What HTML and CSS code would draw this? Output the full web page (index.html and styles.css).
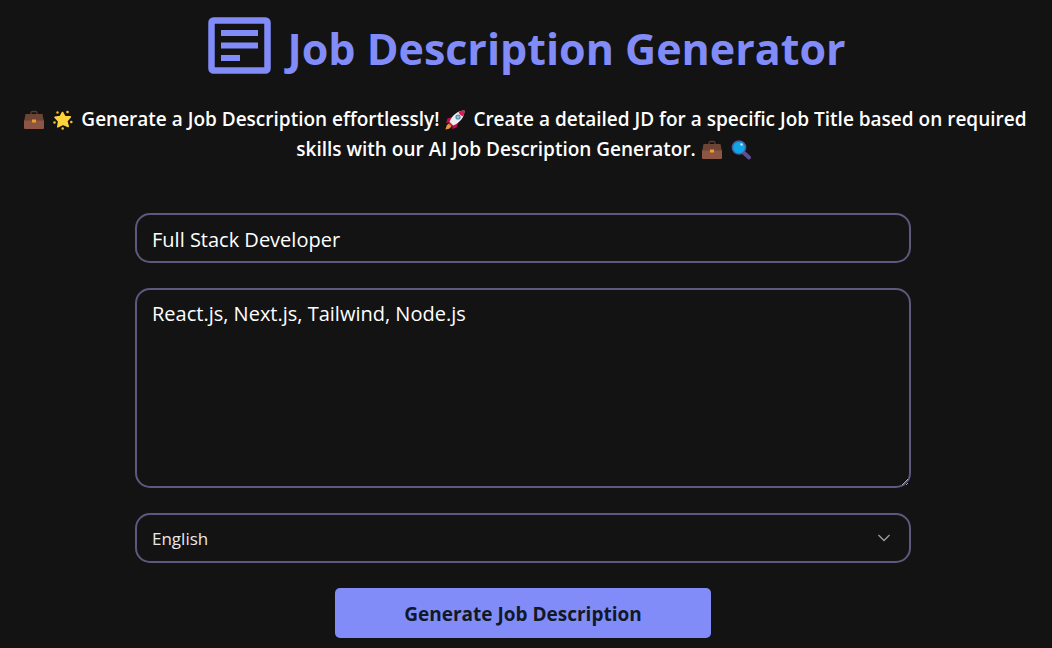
FILE: index.html
```html
<!DOCTYPE html>
<html lang="en">
<head>
<meta charset="utf-8">
<meta name="viewport" content="width=device-width, initial-scale=1">
<title>Job Description Generator</title>
<link rel="stylesheet" href="styles.css">
</head>
<body>
<svg class="sprite" aria-hidden="true">
  <symbol id="briefcase" viewBox="0 0 20 20">
    <path d="M7 5V3q0-1.500 1.500-1.500h3q1.500 0 1.500 1.500v2" fill="none" stroke="#5b3a2e" stroke-width="1.300"/>
    <path d="M1.500 4h17L20 12H0z" fill="#6d4534"/>
    <path d="M0 10.500h20V18q0 1-1 1H1q-1 0-1-1z" fill="#8c5642"/>
    <rect x="8" y="9.500" width="4" height="3" fill="#ee9a2f"/>
  </symbol>
  <symbol id="star" viewBox="0 0 20 20">
    <path d="M9.500 2.500l2.300 4.200 5.500.2-3.500 4.200 1.400 5.400-5.200-2.200-5.200 2.500.9-5.500L2 7.300l5.200-.7z" fill="#ffd43b" stroke="#ffd43b" stroke-width="1.600" stroke-linejoin="round"/>
    <g fill="#f8bd2f"><circle cx="4.500" cy="2.500" r="1.200"/><circle cx="14.500" cy="2" r="1.300"/><circle cx="1.500" cy="12.500" r="1.300"/><circle cx="18.300" cy="12" r="1.300"/><circle cx="9.700" cy="18.500" r="1.300"/></g>
  </symbol>
  <symbol id="rocket" viewBox="0 0 20 20">
    <path d="M7 7L2.500 8.500 1 13l5-1zM13 13l-1.500 4.500L7 19l1-5z" fill="#ca0b4a"/>
    <path d="M5.500 13.500c-3 0-4 1.500-5 6 3.500-.5 6-1.500 6-4.500z" fill="#e9953a"/>
    <path d="M4.500 12C7 5 13 .5 19.500.5 19.500 7 15 13 8 15.500z" fill="#eceff1"/>
    <path d="M13.500 1.800Q16.500.5 19.500.5q0 3-1.300 6Q14.500 5.500 13.500 1.800zM4.500 12l3.500 3.500-1.500 1-3-3z" fill="#dc1956"/>
    <circle cx="13" cy="7" r="2.600" fill="#5586a5"/><circle cx="13" cy="7" r="1.500" fill="#81c7e6"/>
  </symbol>
  <symbol id="search" viewBox="0 0 20 20">
    <path d="M12.500 12.500l5.500 5" stroke="#5c4e91" stroke-width="4" stroke-linecap="round"/>
    <circle cx="8" cy="7.500" r="6.600" fill="#0ea5e9" stroke="#4b5e9c" stroke-width="1.500"/>
    <path d="M9.500 3.500h2v2h-2z" fill="#eaf8ff"/>
  </symbol>
</svg>

<header class="header">
  <h1 class="title">
    <svg class="title-icon" viewBox="0 0 63 57" aria-hidden="true">
      <rect x="3.500" y="3.500" width="56" height="50" rx="2" fill="none" stroke="currentColor" stroke-width="6.500"/>
      <path d="M13 16h37M13 28.500h37M13 41h19" fill="none" stroke="currentColor" stroke-width="6"/>
    </svg>
    <span class="title-text">Job Description Generator</span>
  </h1>
  <p class="intro">
    <svg class="emoji" role="img" aria-label="briefcase"><use href="#briefcase"/></svg>
    <svg class="emoji" role="img" aria-label="glowing star"><use href="#star"/></svg>
    <span>Generate a Job Description effortlessly!</span>
    <svg class="emoji" role="img" aria-label="rocket"><use href="#rocket"/></svg>
    <span>Create a detailed JD for a specific Job Title based on required skills with our AI Job Description Generator.</span>
    <svg class="emoji" role="img" aria-label="briefcase"><use href="#briefcase"/></svg>
    <svg class="emoji" role="img" aria-label="magnifying glass"><use href="#search"/></svg>
  </p>
</header>

<main class="main">
  <form class="form">
    <input class="field field-title" type="text" aria-label="Job title" value="Full Stack Developer">
    <textarea class="field field-skills" aria-label="Required skills" spellcheck="false">React.js, Next.js, Tailwind, Node.js</textarea>
    <div class="select-wrap">
      <select class="field field-select" aria-label="Language"><option>English</option></select>
      <svg class="chevron" viewBox="0 0 12 8" aria-hidden="true"><path d="M.5 1L6 6.500 11.500 1" fill="none" stroke="currentColor" stroke-width="1.300"/></svg>
    </div>
    <button class="submit" type="button">Generate Job Description</button>
  </form>
</main>
</body>
</html>
```
FILE: styles.css
```css
* {
  box-sizing: border-box;
}

body {
  margin: 0;
  background: #131313;
  color: #fff;
  font-family: "Segoe UI", "Open Sans", "Noto Sans", sans-serif;
}

.sprite {
  position: absolute;
  width: 0;
  height: 0;
}

.header {
  padding: 17px 14px 0;
  text-align: center;
}

.title {
  display: flex;
  align-items: center;
  justify-content: center;
  gap: 16px;
  margin: 0;
  padding-left: 2px;
  color: #818cf8;
  font-size: 43px;
  font-weight: 700;
  line-height: 51px;
}

.title-icon {
  flex: none;
  width: 63px;
  height: 57px;
}

.title-text {
  padding-top: 6px;
}

.intro {
  margin: 30px 0 0;
  padding-right: 2px;
  font-size: 19px;
  font-weight: 600;
  line-height: 30px;
}

.emoji {
  width: 20px;
  height: 20px;
  margin: 0 3px 0 1px;
  vertical-align: -4px;
}

.main {
  padding: 49px 141px 10px 135px;
}

.form {
  display: flex;
  flex-direction: column;
  gap: 25px;
}

.field {
  display: block;
  width: 100%;
  height: 50px;
  margin: 0;
  padding: 2px 15px 0;
  border: 2px solid #5d587d;
  border-radius: 15px;
  outline: 0;
  background: transparent;
  color: #fff;
  font-family: inherit;
  font-size: 20px;
  line-height: 30px;
}

.field-skills {
  height: 200px;
  padding-top: 9px;
  resize: vertical;
}

.select-wrap {
  position: relative;
}

.field-select {
  appearance: none;
  color: #e8e8e8;
  font-size: 17px;
}

.field-select option {
  background: #131313;
}

.chevron {
  position: absolute;
  top: 21px;
  right: 21px;
  width: 12px;
  height: 8px;
  color: #a09da8;
  pointer-events: none;
}

.submit {
  align-self: center;
  width: 376px;
  max-width: 100%;
  height: 50px;
  padding: 2px 0 0;
  border: 0;
  border-radius: 5px;
  background: #818cf8;
  color: #111827;
  font-family: inherit;
  font-size: 19px;
  font-weight: 700;
  cursor: pointer;
}
```
